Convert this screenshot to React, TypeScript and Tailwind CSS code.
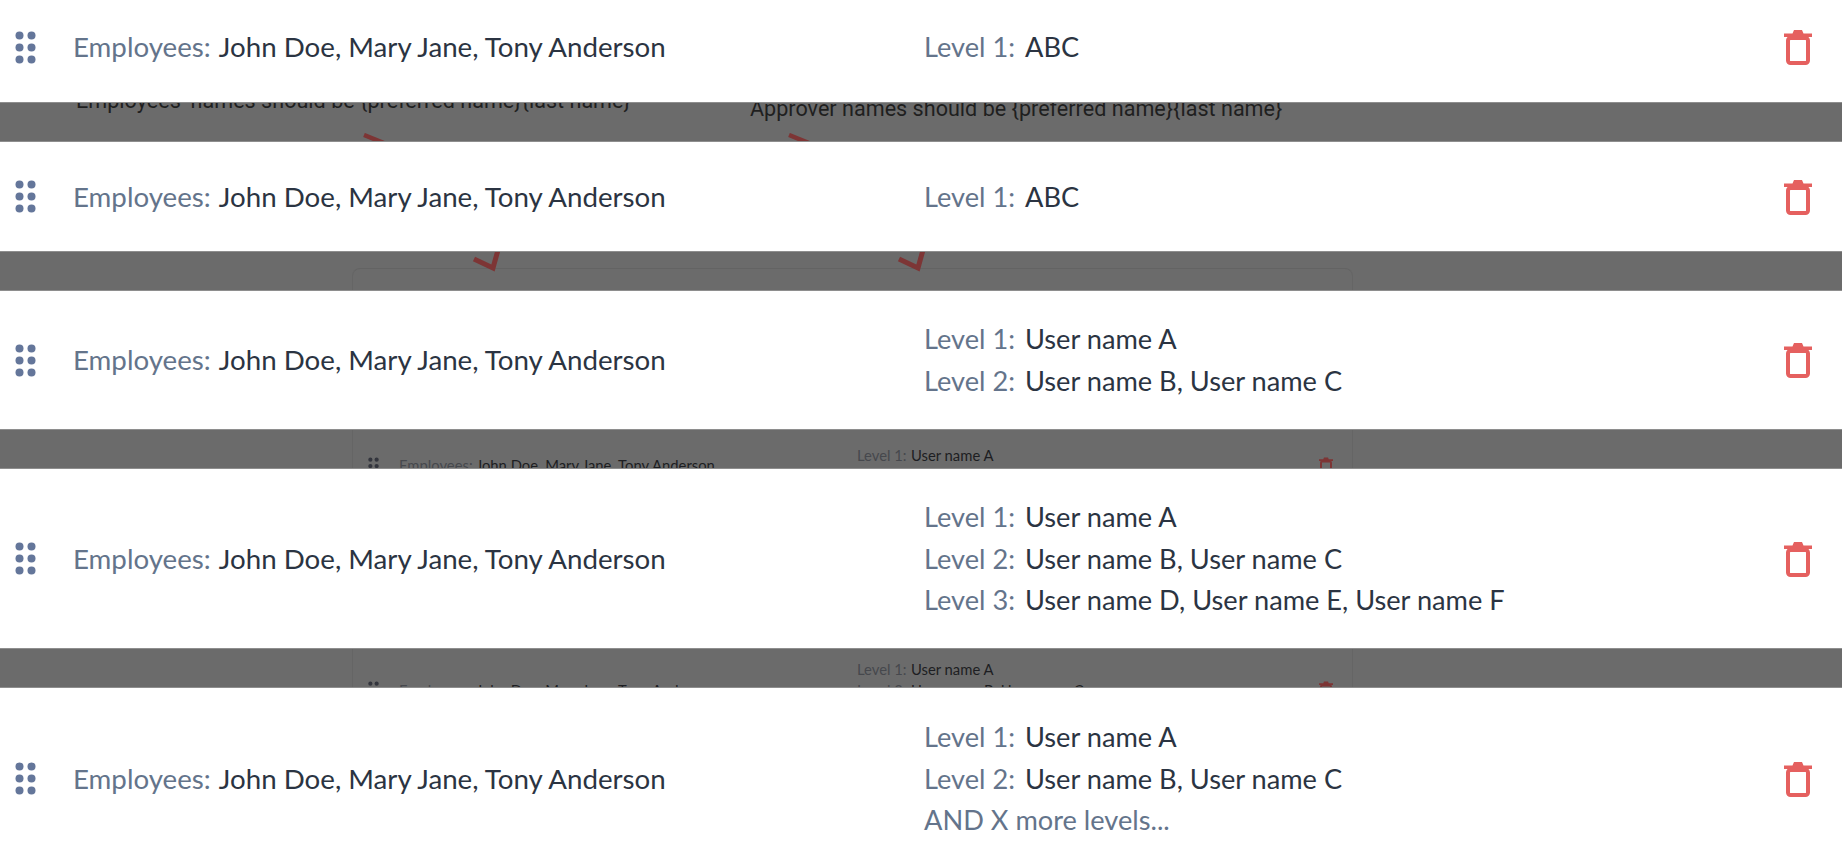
import type { ReactNode } from 'react';

const levelsFor = {
  abc: [['Level 1:', 'ABC']],
  two: [
    ['Level 1:', 'User name A'],
    ['Level 2:', 'User name B, User name C'],
  ],
  three: [
    ['Level 1:', 'User name A'],
    ['Level 2:', 'User name B, User name C'],
    ['Level 3:', 'User name D, User name E, User name F'],
  ],
};

function GripDots({ className, color }: { className: string; color: string }) {
  return (
    <svg viewBox="0 0 21 33" className={className} fill={color}>
      <circle cx="4.5" cy="4.5" r="4" />
      <circle cx="16.5" cy="4.5" r="4" />
      <circle cx="4.5" cy="16.5" r="4" />
      <circle cx="16.5" cy="16.5" r="4" />
      <circle cx="4.5" cy="28.5" r="4" />
      <circle cx="16.5" cy="28.5" r="4" />
    </svg>
  );
}

function TrashIcon({ className, color }: { className: string; color: string }) {
  return (
    <svg viewBox="0 0 28 36" className={className} fill="none">
      <path d="M0 4.5h8.5L10 1h8l1.5 3.5H28V8H0z" fill={color} />
      <rect x="4" y="9" width="20" height="25" rx="2.5" stroke={color} strokeWidth="4" />
    </svg>
  );
}

function Card({
  levels,
  more,
  className,
}: {
  levels: string[][];
  more?: boolean;
  className: string;
}) {
  return (
    <div className={`flex shrink-0 items-center bg-white pl-[15px] pr-[30px] ${className}`}>
      <GripDots className="h-[33px] w-[21px] shrink-0" color="#64769a" />
      <div className="ml-[37px] w-[851px] shrink-0 text-[27.7px] text-[#64748b]">
        Employees: <span className="ml-px text-[#2b3442]">John Doe, Mary Jane, Tony Anderson</span>
      </div>
      <div className="flex-1 text-[27.2px] leading-[41.6px]">
        {levels.map(([label, names]) => (
          <div key={label} className="flex">
            <span className="w-[101px] text-[#64748b]">{label}</span>
            <span className="text-[#2b3442]">{names}</span>
          </div>
        ))}
        {more && <div className="text-[#64748b]">AND X more levels...</div>}
      </div>
      <TrashIcon className="h-[36px] w-[28px] shrink-0" color="#e5605f" />
    </div>
  );
}

// dimmed strip between the cards, with the page behind it showing through
function Backdrop({ children }: { children: ReactNode }) {
  return (
    <div className="relative h-[40px] shrink-0 overflow-hidden border-y border-[#8e8e8e] bg-[#6b6b6b]">
      {children}
    </div>
  );
}

// the same card, small, on the page behind the overlay
function GhostCard({ levels, className }: { levels: string[][]; className: string }) {
  return (
    <div
      className={`ml-[352px] flex w-[1001px] items-center border-x border-[#656565] pr-[19px] pl-[15px] text-[14.8px] leading-[21px] text-[#46484d] ${className}`}
    >
      <GripDots className="h-[18px] w-[11px] shrink-0" color="#33353d" />
      <div className="ml-[20px] w-[458px] shrink-0">
        Employees: <span className="text-[#1d1e22]">John Doe, Mary Jane, Tony Anderson</span>
      </div>
      <div className="flex-1">
        {levels.map(([label, names]) => (
          <div key={label} className="flex">
            <span className="w-[54px]">{label}</span>
            <span className="text-[#1d1e22]">{names}</span>
          </div>
        ))}
      </div>
      <TrashIcon className="h-[18px] w-[14px] shrink-0" color="#7d3535" />
    </div>
  );
}

function ArrowTail({ className }: { className: string }) {
  return (
    <svg viewBox="0 0 24 12" className={`absolute h-[12px] w-[24px] ${className}`}>
      <path d="M2 2l20 8" stroke="#7d3535" strokeWidth="4.5" fill="none" />
    </svg>
  );
}

function ArrowHead({ className }: { className: string }) {
  return (
    <svg viewBox="0 0 30 22" className={`absolute h-[22px] w-[30px] ${className}`}>
      <path d="M3 9l19 9 5-18" stroke="#7d3535" strokeWidth="5" fill="none" />
    </svg>
  );
}

export default function App() {
  return (
    <div className="flex h-[860px] flex-col overflow-hidden bg-white font-['Lato',sans-serif]">
      <Card levels={levelsFor.abc} className="h-[102px] pb-[8px]" />
      <Backdrop>
        <div className="flex items-start pl-[76px] font-['Roboto',sans-serif] text-[21.6px] leading-[24px] whitespace-nowrap text-[#1f1f1f]">
          <div className="mt-[-14px] w-[674px]">
            Employees’ names should be {'{preferred name}{last name}'}
          </div>
          <div className="mt-[-6px]">
            Approver names should be {'{preferred name}{last name}'}
          </div>
        </div>
        <ArrowTail className="top-[30px] left-[362px]" />
        <ArrowTail className="top-[30px] left-[787px]" />
      </Backdrop>
      <Card levels={levelsFor.abc} className="h-[109px]" />
      <Backdrop>
        <GhostCard
          levels={levelsFor.abc}
          className="mt-[16px] h-[60px] rounded-t-lg border-t border-t-[#636363]"
        />
        <ArrowHead className="top-[-2px] left-[471px]" />
        <ArrowHead className="top-[-2px] left-[896px]" />
      </Backdrop>
      <Card levels={levelsFor.two} className="h-[138px]" />
      <Backdrop>
        <GhostCard levels={levelsFor.two} className="h-[71px]" />
      </Backdrop>
      <Card levels={levelsFor.three} className="h-[179px]" />
      <Backdrop>
        <GhostCard levels={levelsFor.three} className="h-[82px]" />
      </Backdrop>
      <Card levels={levelsFor.two} more className="h-[181px]" />
    </div>
  );
}
